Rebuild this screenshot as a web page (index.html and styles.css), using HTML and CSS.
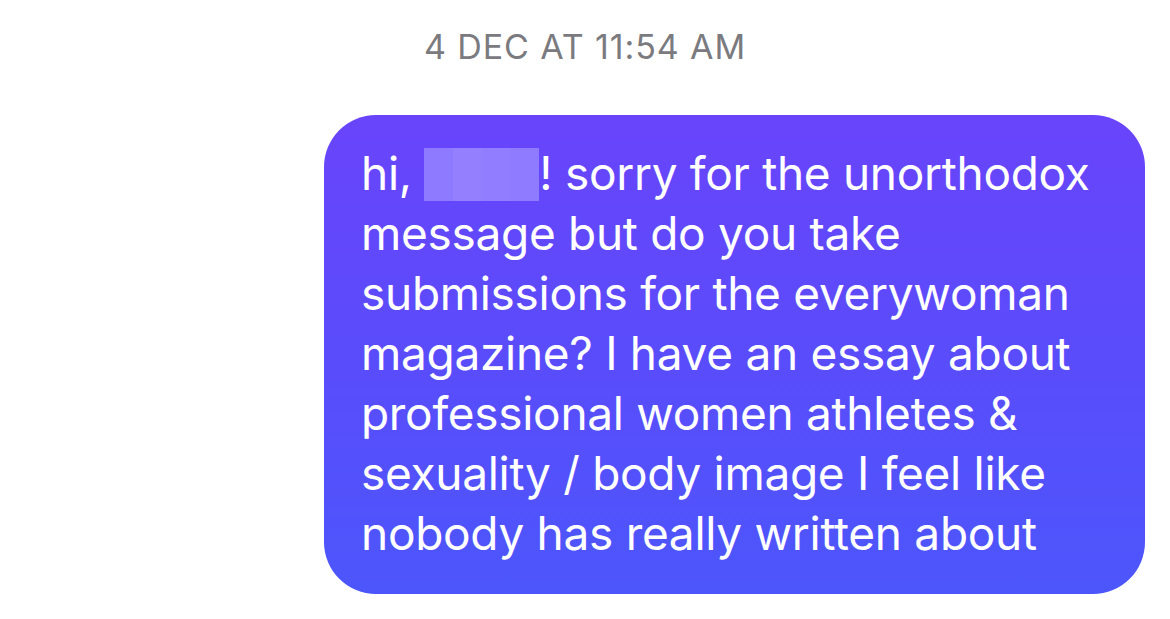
FILE: index.html
```html
<!DOCTYPE html>
<html>
<head>
<meta charset="utf-8">
<link rel="stylesheet" href="styles.css">
</head>
<body>
<div class="thread">
  <div class="timestamp">4 DEC AT 11:54 AM</div>
  <div class="row">
    <div class="bubble">
      <p class="msg">hi, <span class="redact"></span>! sorry for the unorthodox<br>message but do you take<br>submissions for the everywoman<br>magazine? I have an essay about<br>professional women athletes &amp;<br>sexuality / body image I feel like<br>nobody has really written about</p>
    </div>
  </div>
</div>
</body>
</html>
```
FILE: styles.css
```css
html, body {
  margin: 0;
  padding: 0;
  background: #ffffff;
}
.thread {
  width: 1170px;
  height: 619px;
  padding-top: 27px;
  box-sizing: border-box;
  font-family: Inter, "Noto Sans", sans-serif;
}
.timestamp {
  text-align: center;
  font-size: 34px;
  line-height: 40px;
  color: #7b7b7f;
  letter-spacing: 0.9px;
}
.row {
  display: flex;
  justify-content: flex-end;
  padding-right: 25px;
  margin-top: 48px;
}
.bubble {
  width: 821px;
  box-sizing: border-box;
  padding: 28px 20px 31px 37px;
  border-radius: 52px;
  background: linear-gradient(180deg, #6944fb 0%, #5a4cfb 50%, #4c56fb 100%);
}
.msg {
  margin: 0;
  color: #ffffff;
  font-size: 46px;
  line-height: 60px;
  white-space: nowrap;
  letter-spacing: -0.3px;
}
.redact {
  display: inline-block;
  width: 115px;
  height: 53px;
  vertical-align: -11px;
  margin-left: 0;
  margin-right: 0;
  background:
    linear-gradient(90deg, #8e7aff 0 25%, #937fff 25% 50%, #917dff 50% 75%, #8f7bff 75% 100%);
}
```
